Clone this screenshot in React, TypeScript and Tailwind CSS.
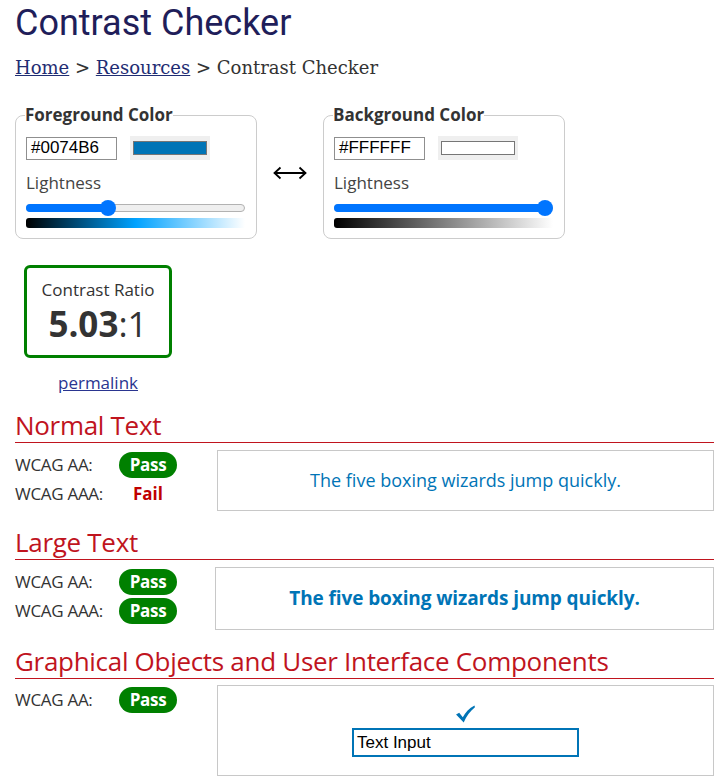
const FG = '#0074B6';

const Slider = ({ pct }: { pct: number }) => {
  return (
    <div className="relative h-[16px] w-[219px] flex items-center">
      <div className="h-[8px] w-full rounded-full bg-[#efefef] border border-[#b2b2b2]" />
      <div
        className="absolute left-0 h-[8px] rounded-full bg-[#0075ff]"
        style={{ width: `${pct}%` }}
      />
      <div
        className="absolute h-[16px] w-[16px] rounded-full bg-[#0075ff] -translate-x-1/2"
        style={{ left: `${pct}%` }}
      />
    </div>
  );
};

const ColorBox = ({
  title,
  hex,
  swatch,
  pct,
  gradient,
}: {
  title: string;
  hex: string;
  swatch: string;
  pct: number;
  gradient: string;
}) => {
  return (
    <fieldset className="w-[242px] border border-[#cccccc] rounded-[8px] px-[10px] pb-[10px]">
      <legend className="text-[17px] font-bold text-[#333] leading-[24px] px-0 -ml-px">{title}</legend>
      <div className="flex items-center gap-[13px] mt-[9px]">
        <div className="w-[91px] h-[23px] border border-[#8f8f8f] pl-[4px] flex items-center text-[17px] text-black font-['Liberation_Sans',Arial,sans-serif]">
          {hex}
        </div>
        <div className="w-[80px] h-[24px] bg-[#efefef] px-[3px] py-[5px]">
          <div className="w-full h-full border border-[#767676]" style={{ background: swatch }} />
        </div>
      </div>
      <div className="mt-[11px] text-[17px] leading-[24px] text-[#444]">Lightness</div>
      <div className="mt-[5px]">
        <Slider pct={pct} />
      </div>
      <div className={`mt-[2px] h-[10px] w-[219px] rounded-l-[3px] ${gradient}`} />
    </fieldset>
  );
};

const Pill = () => (
  <span className="inline-flex items-center justify-center w-[58px] h-[26px] rounded-full bg-[#008000] text-white font-bold text-[17px] leading-none tracking-[-0.3px]">
    Pass
  </span>
);

const Row = ({ label, children }: { label: string; children: React.ReactNode }) => (
  <div className="flex items-center h-[29px]">
    <span className="w-[104px] text-[17px] text-[#333] tracking-[-0.3px]">{label}</span>
    <span className="w-[58px] flex justify-center">{children}</span>
  </div>
);

const Heading = ({ children }: { children: React.ReactNode }) => (
  <h2 className="text-[26px] leading-[33px] text-[#c0141e] border-b border-[#c0141e] tracking-[-0.3px]">
    {children}
  </h2>
);

export default function App() {
  return (
    <div className="w-[727px] h-[776px] overflow-hidden bg-white pl-[15px] pr-[13px] font-['Open_Sans',sans-serif] text-[#333]">
      <h1 className="font-['Roboto',sans-serif] text-[36px] leading-[44px] text-[#1f1e5a] mt-[1px]">
        Contrast Checker
      </h1>
      <div className="mt-[11px] text-[18px] leading-[24px] text-[#333] font-['DejaVu_Serif',serif]">
        <a className="underline text-[#1f2d73]" href="#">Home</a> &gt;{' '}
        <a className="underline text-[#1f2d73]" href="#">Resources</a> &gt; Contrast Checker
      </div>

      <div className="flex items-center mt-[23px]">
        <ColorBox
          title="Foreground Color"
          hex="#0074B6"
          swatch={FG}
          pct={37.5}
          gradient="bg-[linear-gradient(to_right,#000,#00a2ff_50%,#fff)]"
        />
        <div className="w-[66px] flex justify-center mt-[4px]">
          <svg width="34" height="14" viewBox="0 0 34 14" className="block">
            <path
              d="M1.5 7 H32.5 M7.5 1.5 L1.5 7 L7.5 12.5 M26.5 1.5 L32.5 7 L26.5 12.5"
              stroke="#000"
              strokeWidth="1.8"
              fill="none"
              strokeLinejoin="miter"
            />
          </svg>
        </div>
        <ColorBox
          title="Background Color"
          hex="#FFFFFF"
          swatch="#FFFFFF"
          pct={96.5}
          gradient="bg-[linear-gradient(to_right,#000,#fff)]"
        />
      </div>

      <div className="w-[148px] ml-[9px] mt-[26px] flex flex-col items-center">
        <div className="w-[148px] h-[93px] border-[3px] border-[#008000] rounded-[6px] flex flex-col items-center pt-[10px]">
          <div className="text-[17px] leading-[24px] text-[#333]">Contrast Ratio</div>
          <div className="text-[35px] leading-[44px] text-[#333]">
            <span className="font-bold">5.03</span>:1
          </div>
        </div>
        <a href="#" className="mt-[13px] text-[17px] leading-[24px] underline text-[#2a3590]">
          permalink
        </a>
      </div>

      <div className="mt-[14px]">
        <Heading>Normal Text</Heading>
        <div className="flex mt-[7px]">
          <div className="w-[202px]">
            <Row label="WCAG AA:"><Pill /></Row>
            <Row label="WCAG AAA:">
              <span className="font-bold text-[17px] text-[#c00000]">Fail</span>
            </Row>
          </div>
          <div className="flex-1 h-[61px] border border-[#c8c8c8] flex items-center justify-center text-[18px] text-[#0074B6]">
            The five boxing wizards jump quickly.
          </div>
        </div>
      </div>

      <div className="mt-[15px]">
        <Heading>Large Text</Heading>
        <div className="flex mt-[7px]">
          <div className="w-[200px]">
            <Row label="WCAG AA:"><Pill /></Row>
            <Row label="WCAG AAA:"><Pill /></Row>
          </div>
          <div className="flex-1 h-[63px] border border-[#c8c8c8] flex items-center justify-center text-[19px] font-bold text-[#0074B6] tracking-[-0.1px]">
            The five boxing wizards jump quickly.
          </div>
        </div>
      </div>

      <div className="mt-[15px]">
        <Heading>Graphical Objects and User Interface Components</Heading>
        <div className="flex mt-[6px]">
          <div className="w-[202px]">
            <Row label="WCAG AA:"><Pill /></Row>
          </div>
          <div className="flex-1 h-[91px] border border-[#c8c8c8] flex flex-col items-center pt-[19px]">
            <svg width="21" height="18" viewBox="0 0 22 20" className="block">
              <path d="M0.5 10.5 L4 8.5 L8 13.5 C11 8 15 3.5 21 0.5 L21.5 2.5 C16 7 12 12 9 19.5 Z" fill="#0074B6" />
            </svg>
            <div className="mt-[5px] w-[227px] h-[29px] border-2 border-[#0074B6] flex items-center pl-[3px] text-[17px] text-black font-['Liberation_Sans',Arial,sans-serif]">
              Text Input
            </div>
          </div>
        </div>
      </div>
    </div>
  );
}
